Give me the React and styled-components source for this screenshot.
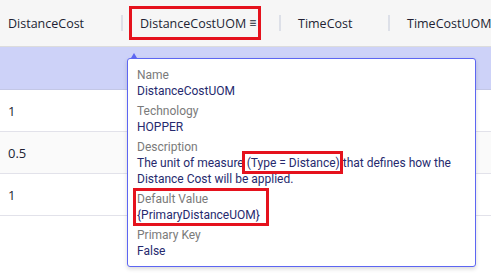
import React from 'react';
import styled, { createGlobalStyle } from 'styled-components';

const GlobalStyle = createGlobalStyle`
  html, body {
    margin: 0;
    padding: 0;
    background: #ffffff;
  }
  body {
    font-family: 'Open Sans', 'Noto Sans', sans-serif;
  }
`;

const Page = styled.div`
  position: relative;
  width: 491px;
  height: 276px;
  overflow: hidden;
  background: #ffffff;
`;

const Grid = styled.div`
  display: flex;
  flex-direction: column;
`;

const HeaderRow = styled.div`
  display: grid;
  grid-template-columns: 121px 158px 109px 1fr;
  height: 46px;
  background: #f6f6f6;
  border-bottom: 1px solid #dcdcdc;
`;

const HeaderCell = styled.div`
  display: flex;
  align-items: center;
  position: relative;
  padding-left: ${(p) => (p.$first ? '8px' : '19px')};
  font-size: 12.5px;
  color: #221f33;
  white-space: nowrap;
  overflow: hidden;

  ${(p) =>
    !p.$first &&
    `
    &::before {
      content: '';
      position: absolute;
      left: 0;
      top: 15px;
      width: 2px;
      height: 16px;
      background: #dde0e8;
    }
  `}
`;

const Marked = styled.div`
  display: flex;
  align-items: center;
  gap: 3px;
  height: 28px;
  margin-left: -11px;
  padding: 0 2px 0 8px;
  border: 3px solid #e5121d;
`;

const MenuIcon = styled.span`
  font-size: 12px;
  line-height: 1;
`;

const Row = styled.div`
  display: grid;
  grid-template-columns: 121px 158px 109px 1fr;
  height: ${(p) => (p.$selected ? '42px' : '41px')};
  background: ${(p) => (p.$selected ? '#cdd2f8' : p.$alt ? '#fafafa' : '#ffffff')};
  border-bottom: 1px solid ${(p) => (p.$selected ? '#c3c7e6' : '#e2e2ea')};
`;

const Cell = styled.div`
  display: flex;
  align-items: center;
  padding-left: 8px;
  font-size: 13px;
  color: #221f33;
`;

const Popover = styled.div`
  position: absolute;
  left: 127px;
  top: 58px;
  width: 349px;
  height: 209px;
  box-sizing: border-box;
  padding: 8px 10px 0 9px;
  background: #ffffff;
  border: 1px solid #5d66f2;
  border-radius: 3px;
  box-shadow: 0 2px 4px rgba(0, 0, 0, 0.15);
  font-family: Roboto, 'Noto Sans', sans-serif;
  font-size: 12px;
  line-height: 16px;

  &::before {
    content: '';
    position: absolute;
    left: 3px;
    top: -6px;
    border-left: 3px solid transparent;
    border-right: 3px solid transparent;
    border-bottom: 5px solid #5d66f2;
  }
`;

const Field = styled.div`
  margin-bottom: 4px;
`;

const BoxedField = styled.div`
  width: fit-content;
  margin: -3px 0 1px -4px;
  padding: 0 6px 0 1px;
  border: 3px solid #e5121d;
`;

const Label = styled.div`
  color: #7a7a7a;
`;

const Value = styled.div`
  color: #262a6e;
`;

const Highlight = styled.span`
  position: relative;

  &::after {
    content: '';
    position: absolute;
    left: -5px;
    right: -3px;
    top: -5px;
    bottom: -4px;
    border: 3px solid #e5121d;
  }
`;

const rows = [
  { selected: true, value: '' },
  { value: '1' },
  { value: '0.5', alt: true },
  { value: '1' },
];

export default function App() {
  return (
    <>
      <GlobalStyle />
      <Page>
        <Grid>
          <HeaderRow>
            <HeaderCell $first>DistanceCost</HeaderCell>
            <HeaderCell>
              <Marked>
                DistanceCostUOM
                <MenuIcon>≡</MenuIcon>
              </Marked>
            </HeaderCell>
            <HeaderCell>TimeCost</HeaderCell>
            <HeaderCell>TimeCostUOM</HeaderCell>
          </HeaderRow>
          {rows.map((r, i) => (
            <Row key={i} $selected={r.selected} $alt={r.alt}>
              <Cell>{r.value}</Cell>
              <Cell />
              <Cell />
              <Cell />
            </Row>
          ))}
        </Grid>

        <Popover>
          <Field>
            <Label>Name</Label>
            <Value>DistanceCostUOM</Value>
          </Field>
          <Field>
            <Label>Technology</Label>
            <Value>HOPPER</Value>
          </Field>
          <Field>
            <Label>Description</Label>
            <Value>
              The unit of measure <Highlight>(Type = Distance)</Highlight> that defines how the
              Distance Cost will be applied.
            </Value>
          </Field>
          <BoxedField>
            <Label>Default Value</Label>
            <Value>{'{PrimaryDistanceUOM}'}</Value>
          </BoxedField>
          <Field>
            <Label>Primary Key</Label>
            <Value>False</Value>
          </Field>
        </Popover>
      </Page>
    </>
  );
}
